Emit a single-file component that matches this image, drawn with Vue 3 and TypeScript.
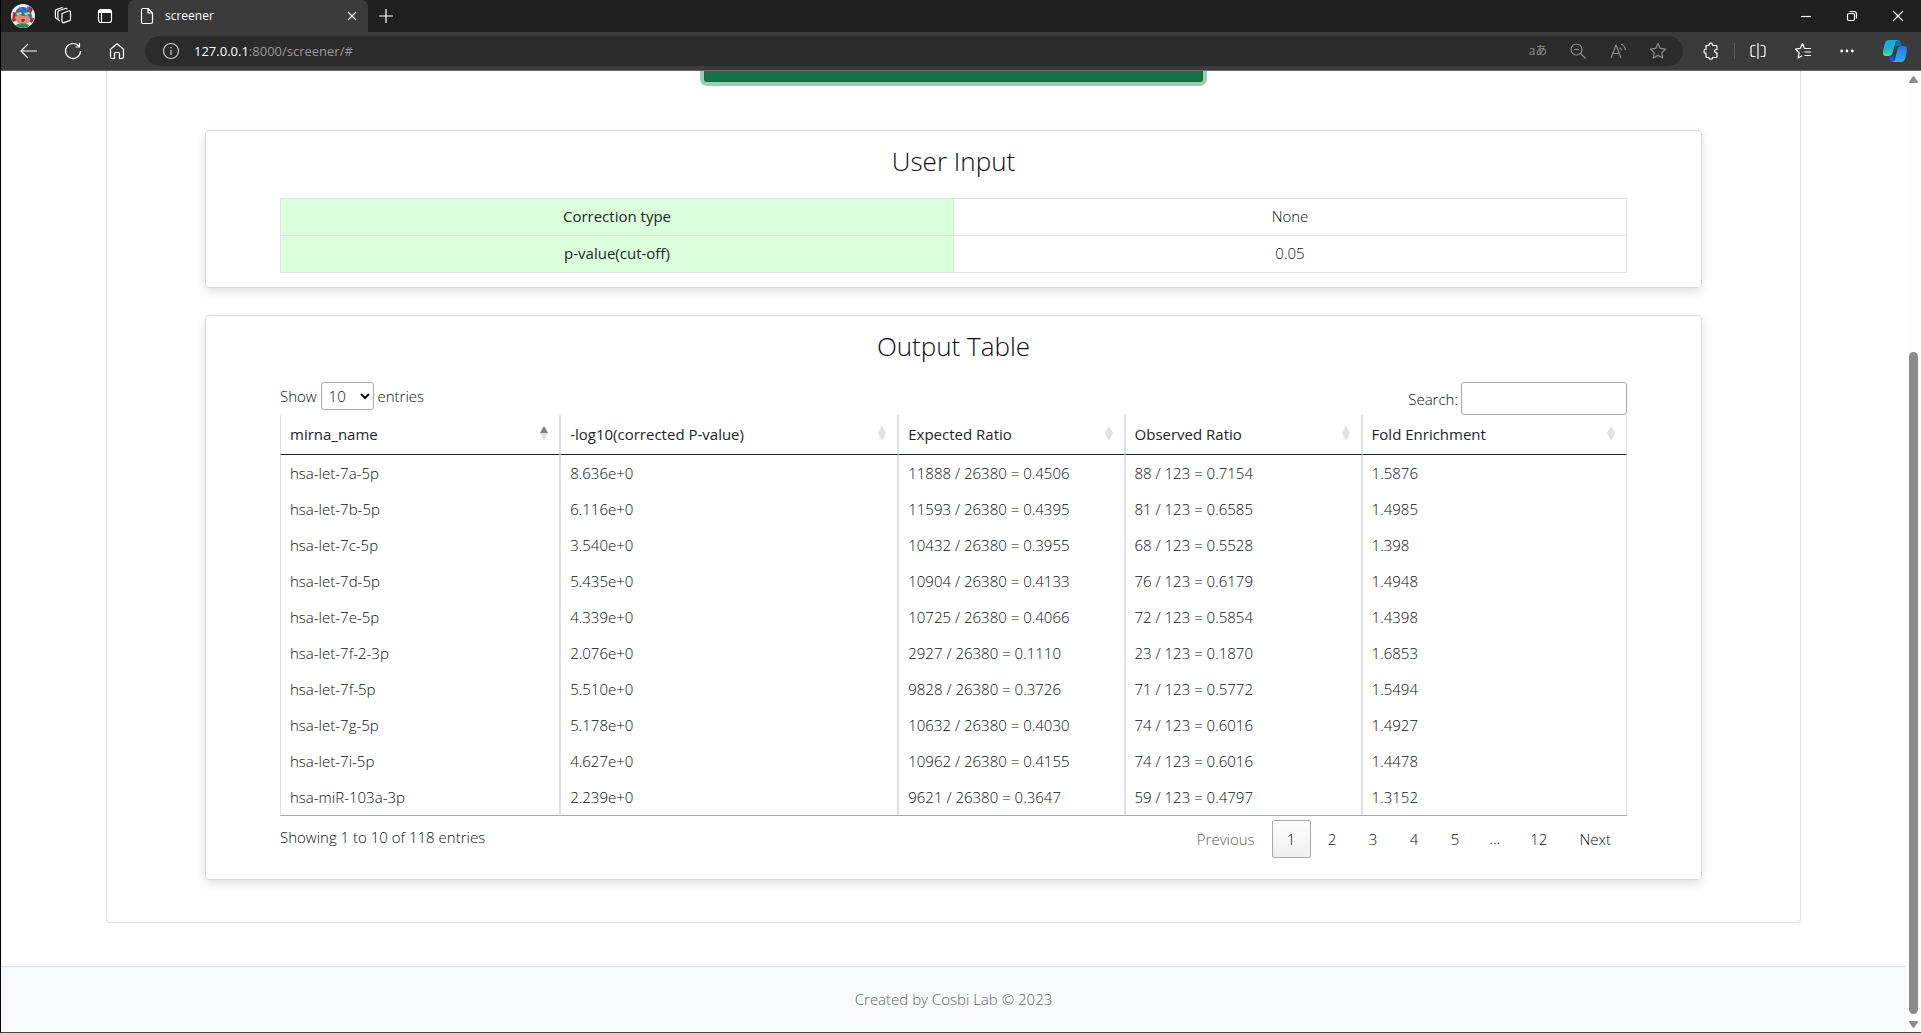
<script setup lang="ts">
import { ref } from 'vue'

interface Column {
  label: string
  width: number
  sorted: boolean
}

const columns: Column[] = [
  { label: 'mirna_name', width: 20.8, sorted: true },
  { label: '-log10(corrected P-value)', width: 25.1, sorted: false },
  { label: 'Expected Ratio', width: 16.8, sorted: false },
  { label: 'Observed Ratio', width: 17.6, sorted: false },
  { label: 'Fold Enrichment', width: 19.7, sorted: false },
]

const rows: string[][] = [
  ['hsa-let-7a-5p', '8.636e+0', '11888 / 26380 = 0.4506', '88 / 123 = 0.7154', '1.5876'],
  ['hsa-let-7b-5p', '6.116e+0', '11593 / 26380 = 0.4395', '81 / 123 = 0.6585', '1.4985'],
  ['hsa-let-7c-5p', '3.540e+0', '10432 / 26380 = 0.3955', '68 / 123 = 0.5528', '1.398'],
  ['hsa-let-7d-5p', '5.435e+0', '10904 / 26380 = 0.4133', '76 / 123 = 0.6179', '1.4948'],
  ['hsa-let-7e-5p', '4.339e+0', '10725 / 26380 = 0.4066', '72 / 123 = 0.5854', '1.4398'],
  ['hsa-let-7f-2-3p', '2.076e+0', '2927 / 26380 = 0.1110', '23 / 123 = 0.1870', '1.6853'],
  ['hsa-let-7f-5p', '5.510e+0', '9828 / 26380 = 0.3726', '71 / 123 = 0.5772', '1.5494'],
  ['hsa-let-7g-5p', '5.178e+0', '10632 / 26380 = 0.4030', '74 / 123 = 0.6016', '1.4927'],
  ['hsa-let-7i-5p', '4.627e+0', '10962 / 26380 = 0.4155', '74 / 123 = 0.6016', '1.4478'],
  ['hsa-miR-103a-3p', '2.239e+0', '9621 / 26380 = 0.3647', '59 / 123 = 0.4797', '1.3152'],
]

const inputs: string[][] = [
  ['Correction type', 'None'],
  ['p-value(cut-off)', '0.05'],
]

const pageSize = ref('10')
const search = ref('')
</script>

<template>
  <div class="window">
    <header class="titlebar">
      <button class="icon w40" aria-label="Profile">
        <svg width="24" height="24" viewBox="0 0 24 24">
          <defs><clipPath id="face"><circle cx="12" cy="12" r="12" /></clipPath></defs>
          <g clip-path="url(#face)">
            <rect width="24" height="24" fill="#e9edf2" />
            <path d="M2 8l4 1-1 8-4 1zM18 2l4 3-2 4-4-3zM19 13l4 1-2 5-3-2z" fill="#c02433" />
            <ellipse cx="12" cy="13" rx="8" ry="8" fill="#dd8f78" />
            <path d="M4 12C4 5 8 3 12 3s8 3 9 9l-1 4-3-5-5 1-5-2-2 3z" fill="#2b6cc0" />
            <path d="M8 3l3 2-3 2zM17 2l1 4-4 0z" fill="#3d84d8" />
            <path d="M5 9l5-1 1 2-5 1zM13 9l5-1 1 2-5 1z" fill="#f2cf2e" />
            <path d="M10 15h4l-1 3h-2z" fill="#a92f2f" />
            <path d="M5 21c3-2 10-2 13 0l-1 3H6z" fill="#2f8a4d" />
          </g>
        </svg>
      </button>
      <button class="icon w40" aria-label="Workspaces">
        <svg width="18" height="18" viewBox="0 0 18 18" class="line">
          <path d="M8 6.5l6.500-2.500q2-.5 2 1.200v7q0 1-1 1.400l-5.500 2q-2 .5-2-1.300z" />
          <path d="M6 14l-1.500-1q-.6-.4-.6-1.300V5.200q0-1 .9-1.400L11.500 1.500q1-.3 1.800.7" />
          <path d="M3 12l-1-.8q-.6-.5-.6-1.300V4q0-1 .9-1.400L7.500.8q.8-.2 1.500.3" />
        </svg>
      </button>
      <button class="icon w44" aria-label="Tab actions">
        <svg width="16" height="16" viewBox="0 0 16 16" class="line">
          <rect x="1.500" y="1.500" width="13" height="13" rx="2.500" />
          <path d="M4.500 5v9.500" /><path d="M2 3.500h12" stroke-width="3" />
        </svg>
      </button>
      <div class="tab">
        <svg width="14" height="18" viewBox="0 0 14 18" class="line">
          <path d="M1.500 3q0-1.500 1.500-1.500h5l4.500 4.500v9q0 1.500-1.500 1.500H3q-1.500 0-1.500-1.500zM8 1.500V6h4.500" />
        </svg>
        <span class="tab-title">screener</span>
        <button class="icon close" aria-label="Close tab">
          <svg width="10" height="10" viewBox="0 0 10 10" class="line"><path d="M1 1l8 8M9 1l-8 8" /></svg>
        </button>
      </div>
      <button class="icon w36" aria-label="New tab">
        <svg width="14" height="14" viewBox="0 0 14 14" class="line"><path d="M7 0v14M0 7h14" /></svg>
      </button>
      <span class="spring"></span>
      <button class="icon w46" aria-label="Minimize">
        <svg width="10" height="10" viewBox="0 0 10 10" class="line"><path d="M0 5.500h10" /></svg>
      </button>
      <button class="icon w46" aria-label="Restore">
        <svg width="12" height="12" viewBox="0 0 12 12" class="line">
          <rect x="1.500" y="3.500" width="7" height="7" rx="1.500" />
          <path d="M3.500 1.500H8q2.500 0 2.500 2.500v4.500" />
        </svg>
      </button>
      <button class="icon w46" aria-label="Close">
        <svg width="12" height="12" viewBox="0 0 12 12" class="line"><path d="M1 1l10 10M11 1L1 11" /></svg>
      </button>
    </header>

    <nav class="toolbar">
      <button class="icon w44" aria-label="Back">
        <svg width="18" height="16" viewBox="0 0 18 16" class="line"><path d="M17 8H1.500M8 1L1 8l7 7" /></svg>
      </button>
      <button class="icon w44" aria-label="Refresh">
        <svg width="18" height="18" viewBox="0 0 18 18" class="line">
          <path d="M15 4.500A7.500 7.500 0 1 0 16.500 9M15.500 1v4h-4" />
        </svg>
      </button>
      <button class="icon w44" aria-label="Home">
        <svg width="16" height="18" viewBox="0 0 16 18" class="line">
          <path d="M1.500 7.200L8 1.700l6.500 5.500v7.800q0 1.500-1.500 1.500h-2.500v-5q0-1-1-1h-3q-1 0-1 1v5H3q-1.500 0-1.500-1.500z" />
        </svg>
      </button>
      <div class="address">
        <button class="icon info" aria-label="Site information">
          <svg width="18" height="18" viewBox="0 0 18 18" class="line">
            <circle cx="9" cy="9" r="7.500" /><path d="M9 8v5M9 5v1.500" />
          </svg>
        </button>
        <span class="url"><b>127.0.0.1</b>:8000/screener/#</span>
        <span class="spring"></span>
        <button class="icon w40 dim" aria-label="Translate"><span class="translate">aあ</span></button>
        <button class="icon w40 dim" aria-label="Zoom out">
          <svg width="16" height="16" viewBox="0 0 16 16" class="line">
            <circle cx="6.500" cy="6.500" r="5.500" /><path d="M4 6.500h5M10.500 10.500l5 5" />
          </svg>
        </button>
        <button class="icon w40 dim" aria-label="Read aloud">
          <svg width="17" height="16" viewBox="0 0 17 16" class="line">
            <path d="M1 15L6 2l5 13M3 10.500h6M9.500 4.500q1.700.7 2 3M11 1q3.800 1.500 4.500 6" />
          </svg>
        </button>
        <button class="icon w40 dim" aria-label="Add to favorites">
          <svg width="18" height="18" viewBox="0 0 18 18" class="line">
            <path d="M9 1.500l2.300 4.900 5.200.7-3.800 3.600 1 5.300L9 13.400 4.300 16l1-5.300L1.500 7.100l5.200-.7z" />
          </svg>
        </button>
      </div>
      <button class="icon w46" aria-label="Extensions">
        <svg width="16" height="18" viewBox="0 0 16 18" class="line">
          <path d="M3 3.500h3q-.3-2.300 1.800-2.300t1.800 2.300H13q1 0 1 1v3q-2.300-.2-2.300 1.700t2.300 1.700v3.600q0 1-1 1H9.600q.2 1.700-1.800 1.700T6 15.500H4q-1 0-1-1v-3.300q-2 .2-2-2t2-1.900z" />
        </svg>
      </button>
      <span class="divider"></span>
      <button class="icon w46" aria-label="Split screen">
        <svg width="16" height="16" viewBox="0 0 16 16" class="line">
          <path d="M5.500 2.500H3q-2 0-2 2v7q0 2 2 2h2.500M10.500 2.500H13q2 0 2 2v7q0 2-2 2h-2.500M8 0v16" />
        </svg>
      </button>
      <button class="icon w44" aria-label="Favorites">
        <svg width="18" height="18" viewBox="0 0 18 18" class="line">
          <path d="M10.500 6.500L8.500 1.500 6.300 6.300l-4.800.7 3.600 3.600-1 5.400 4-2.300M10.500 6.500H17M10.500 10H17M10.500 13.500H17" />
        </svg>
      </button>
      <button class="icon w44" aria-label="Settings and more">
        <svg width="14" height="4" viewBox="0 0 14 4" fill="#fff">
          <circle cx="1.700" cy="2" r="1.400" /><circle cx="7" cy="2" r="1.400" /><circle cx="12.300" cy="2" r="1.400" />
        </svg>
      </button>
      <button class="icon copilot" aria-label="Copilot">
        <svg width="24" height="22" viewBox="0 0 24 22">
          <defs>
            <linearGradient id="cpA" x1="0" y1="0" x2="0" y2="1">
              <stop offset="0" stop-color="#16a9e8" /><stop offset=".55" stop-color="#16b5c8" /><stop offset="1" stop-color="#5fd78e" />
            </linearGradient>
            <linearGradient id="cpB" x1="0" y1="0" x2="0" y2="1">
              <stop offset="0" stop-color="#2a6fe0" /><stop offset="1" stop-color="#22b9f5" />
            </linearGradient>
          </defs>
          <path d="M12 0h3.500q1.500 0 2 1.500L18.500 6H15q-2 0-2.600 2z" fill="#0f6fae" />
          <path d="M6 16h5l1 6H9q-2 0-2.500-2z" fill="#1a4fd6" />
          <path d="M6 0h9q-2 .5-2.600 2.500L9.500 13q-.8 3-3.500 3H2.500Q0 16 0 13q0-3 2-10Q3 0 6 0z" fill="url(#cpA)" />
          <path d="M18 6h3.500Q24 6 24 9q0 3-2 10-1 3-4 3H9.500q2-.5 2.600-2.500L14.500 9q.8-3 3.500-3z" fill="url(#cpB)" />
        </svg>
      </button>
    </nav>

    <div class="viewport">
      <div class="page">
        <main class="panel">
          <button class="submit" aria-label="Submit"></button>

          <section class="card">
            <h2>User Input</h2>
            <table class="inputs">
              <tbody>
                <tr v-for="item in inputs" :key="item[0]">
                  <th scope="row">{{ item[0] }}</th>
                  <td>{{ item[1] }}</td>
                </tr>
              </tbody>
            </table>
          </section>

          <section class="card output">
            <h2>Output Table</h2>
            <div class="controls">
              <label class="length">
                Show
                <select v-model="pageSize">
                  <option>10</option>
                  <option>25</option>
                  <option>50</option>
                  <option>100</option>
                </select>
                entries
              </label>
              <label class="search">Search:<input v-model="search" type="search" /></label>
            </div>
            <table class="data">
              <colgroup>
                <col v-for="col in columns" :key="col.label" :style="{ width: col.width + '%' }" />
              </colgroup>
              <thead>
                <tr>
                  <th v-for="col in columns" :key="col.label" scope="col">
                    <span class="head">
                      {{ col.label }}
                      <svg width="8" height="15" viewBox="0 0 8 15">
                        <path d="M0 7L4 0l4 7z" :fill="col.sorted ? '#7d7d7d' : '#e1e3e3'" />
                        <path d="M0 7h8l-4 8z" fill="#e1e3e3" />
                      </svg>
                    </span>
                  </th>
                </tr>
              </thead>
              <tbody>
                <tr v-for="row in rows" :key="row[0]">
                  <td v-for="(cell, i) in row" :key="i">{{ cell }}</td>
                </tr>
              </tbody>
            </table>
            <div class="bottom">
              <span>Showing 1 to 10 of 118 entries</span>
              <div class="pager">
                <button class="page-btn" disabled>Previous</button>
                <button class="page-btn current">1</button>
                <button v-for="n in 4" :key="n" class="page-btn">{{ n + 1 }}</button>
                <span class="ellipsis">…</span>
                <button class="page-btn">12</button>
                <button class="page-btn">Next</button>
              </div>
            </div>
          </section>
        </main>
        <footer class="footer">Created by Cosbi Lab © 2023</footer>
      </div>
      <div class="scrollbar">
        <svg width="9" height="7" viewBox="0 0 9 7" fill="#8b8b8b"><path d="M3.500.8q1-1.300 2 0L8.800 5.500Q9 7 8 7H1Q0 7 .2 5.500z" /></svg>
        <span class="thumb"></span>
        <svg width="9" height="7" viewBox="0 0 9 7" fill="#8b8b8b"><path d="M3.500 6.200q1 1.300 2 0L8.800 1.500Q9 0 8 0H1Q0 0 .2 1.500z" /></svg>
      </div>
    </div>
  </div>
</template>

<style>
body {
  margin: 0;
  background: #fff;
}
</style>

<style scoped>
* {
  box-sizing: border-box;
}
.window {
  display: flex;
  flex-direction: column;
  min-height: 100vh;
  border-left: 1px solid #000;
  border-bottom: 1px solid #4a4444;
  color: #0c0e10;
  font: 350 15px/24px "Open Sans", "Noto Sans", sans-serif;
}
button,
input,
select {
  font: inherit;
  color: inherit;
}
.titlebar {
  display: flex;
  height: 32px;
  padding-left: 2px;
  background: #202020;
  color: #fff;
}
.icon {
  display: flex;
  align-items: center;
  justify-content: center;
  padding: 0;
  border: 0;
  background: none;
  color: #fff;
}
.line {
  fill: none;
  stroke: currentColor;
  stroke-width: 1.2;
  stroke-linejoin: round;
}
.w36 { width: 36px; }
.w40 { width: 40px; }
.w44 { width: 44px; }
.w46 { width: 46px; }
.spring {
  flex: 1;
}
.tab {
  display: flex;
  align-items: center;
  width: 240px;
  margin-left: 1px;
  padding: 0 4px 0 12px;
  border-radius: 6px 6px 0 0;
  background: #3b3b3b;
}
.tab-title {
  flex: 1;
  padding-left: 11px;
  font-size: 12px;
  font-weight: 400;
}
.close {
  width: 24px;
  height: 24px;
}
.toolbar {
  display: flex;
  height: 39px;
  padding-left: 6px;
  background: #3b3b3b;
  border-bottom: 1px solid #6b6767;
}
.address {
  display: flex;
  flex: 1;
  height: 30px;
  margin: 4px 5px 0 6px;
  padding-right: 5px;
  border-radius: 15px;
  background: #2b2b2b;
}
.info {
  width: 49px;
  padding-left: 2px;
  color: #ccc;
}
.url {
  color: #9a9a9a;
  font-size: 13px;
  font-weight: 400;
  line-height: 30px;
}
.url b {
  color: #fff;
  font-weight: 400;
}
.dim {
  color: #8f8f8f;
}
.translate {
  font: 12px/16px "Open Sans", "Noto Sans CJK JP", sans-serif;
}
.copilot {
  width: 52px;
}
.divider {
  width: 1px;
  height: 16px;
  margin-top: 11px;
  background: #5c5c5c;
}
.viewport {
  display: flex;
  flex: 1;
}
.page {
  display: flex;
  flex: 1;
  flex-direction: column;
}
.panel {
  display: flex;
  flex-direction: column;
  align-items: center;
  width: 89%;
  margin: 0 auto 43px;
  padding-bottom: 42px;
  border: 1px solid #dfdfdf;
  border-top: 0;
  border-radius: 0 0 4px 4px;
}
.submit {
  width: 499px;
  height: 11px;
  margin-bottom: 48px;
  padding: 0;
  border: 1px solid #146c43;
  border-top: 0;
  border-radius: 0 0 3px 3px;
  background: #157347;
  box-shadow: 0 0 0 4px #9dccb6;
  clip-path: inset(0 -4px -4px -4px);
}
.card {
  width: 88.4%;
  margin-bottom: 27px;
  padding: 13px 74px 14px;
  border: 1px solid #d8d9da;
  border-radius: 4px;
  box-shadow: 0 4px 10px rgba(0, 0, 0, 0.12);
}
.card.output {
  margin-bottom: 0;
  padding-bottom: 21px;
}
h2 {
  margin: 0 0 19px;
  font-size: 26px;
  font-weight: 350;
  line-height: 34px;
  text-align: center;
}
.inputs {
  width: 100%;
  margin-top: 20px;
  border-collapse: collapse;
  table-layout: fixed;
  text-align: center;
}
.inputs th,
.inputs td {
  height: 37px;
  padding: 0 0 2px;
  border: 1px solid #dee2e6;
}
.inputs th {
  background: #daffda;
  color: #212529;
  font-weight: 500;
}
.controls {
  display: flex;
  justify-content: space-between;
  height: 33px;
}
.length select {
  width: 53px;
  height: 28px;
  padding: 0 0 0 3px;
  border: 1px solid #aaa;
  border-radius: 3px;
  background: transparent;
}
.search {
  display: flex;
  align-items: center;
  gap: 3px;
}
.search input {
  width: 166px;
  height: 33px;
  padding: 5px;
  border: 1px solid #aaa;
  border-radius: 3px;
  background: transparent;
}
.data {
  width: 100%;
  border-collapse: separate;
  border-spacing: 0;
  table-layout: fixed;
  border-bottom: 1px solid #aaa;
}
.data th,
.data td {
  height: 36px;
  padding: 0 9px;
  border: solid #dee2e6;
  border-width: 0 1px;
  text-align: left;
}
.data th {
  height: 40px;
  padding-bottom: 2px;
  border-bottom: 1px solid #212529;
  color: #212529;
  font-weight: 500;
}
.head {
  display: flex;
  align-items: center;
  justify-content: space-between;
  padding-right: 2px;
}
.bottom {
  display: flex;
  align-items: flex-start;
  justify-content: space-between;
  padding-top: 4px;
  line-height: 34px;
}
.pager {
  display: flex;
  gap: 2px;
  padding-right: 1px;
}
.page-btn {
  min-width: 39px;
  height: 38px;
  padding: 0 14px 1px;
  border: 1px solid transparent;
  border-radius: 2px;
  background: none;
}
.page-btn:disabled {
  color: #5c5c5c;
}
.page-btn.current {
  border-color: #aaa;
  background: linear-gradient(#fff, #efefef);
}
.ellipsis {
  padding: 0 13px;
  line-height: 36px;
}
.footer {
  flex: 1;
  padding: 20px 0;
  border-top: 1px solid #dfe0e2;
  background: #f8f9fa;
  color: #5c656d;
  text-align: center;
}
.scrollbar {
  display: flex;
  flex-direction: column;
  align-items: center;
  width: 15px;
  padding: 5px 0 4px;
  background: #fcfcfc;
}
.thumb {
  flex: 1;
  width: 9px;
  margin: 269px 0 7px;
  border-radius: 5px;
  background: #8b8b8b;
}
</style>
